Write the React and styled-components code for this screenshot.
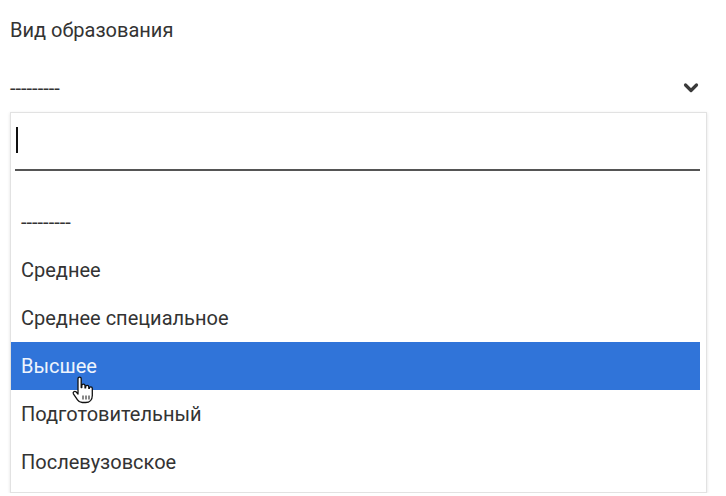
import React from "react";
import styled, { createGlobalStyle } from "styled-components";

const Global = createGlobalStyle`
  html, body { margin: 0; padding: 0; background: #ffffff; }
  body { font-family: Roboto, "Noto Sans", "Liberation Sans", sans-serif; color: #333; }
`;

const Page = styled.div`
  padding: 0 19px 0 10px;
`;

const Label = styled.div`
  margin-top: 18px;
  height: 24px;
  line-height: 24px;
  font-size: 20px;
  color: #333;
`;

const SelectRow = styled.div`
  margin-top: 26px;
  height: 40px;
  display: flex;
  align-items: center;
  justify-content: space-between;
  padding-right: 8px;
  font-size: 20px;
  color: #333;
`;

const Chevron = styled.svg`
  width: 16px;
  height: 16px;
  display: block;
`;

const Panel = styled.div`
  margin-top: 4px;
  border: 1px solid #e2e2e2;
  box-shadow: 0 1px 3px rgba(0, 0, 0, 0.12);
  background: #fff;
  padding-bottom: 6px;
`;

const SearchWrap = styled.div`
  padding: 7px 6px 0 4px;
  margin-bottom: 27px;
`;

const SearchField = styled.div`
  height: 42px;
  padding-top: 7px;
  border-bottom: 2px solid #555;
  display: flex;
  align-items: flex-start;
  padding-left: 1px;
`;

const Caret = styled.span`
  display: block;
  width: 2px;
  height: 26px;
  background: #111;
`;

const List = styled.ul`
  list-style: none;
  margin: 0 6px 0 0;
  padding: 0;
`;

const Item = styled.li`
  position: relative;
  height: 48px;
  display: flex;
  align-items: center;
  padding-left: 10px;
  font-size: 20px;
  color: ${(p) => (p.$active ? "#eef4fd" : "#333")};
  background: ${(p) => (p.$active ? "#3074d9" : "transparent")};
`;

const Hand = styled.svg`
  position: absolute;
  left: 59px;
  top: 34px;
  width: 24px;
  height: 29px;
`;

const options = [
  "---------",
  "Среднее",
  "Среднее специальное",
  "Высшее",
  "Подготовительный",
  "Послевузовское",
];

export default function App() {
  return (
    <>
      <Global />
      <Page>
        <Label>Вид образования</Label>
        <SelectRow>
          <span>---------</span>
          <Chevron viewBox="0 0 16 16">
            <polyline
              points="2.5,5 8,10.5 13.5,5"
              fill="none"
              stroke="#3a3a3a"
              strokeWidth="3.2"
              strokeLinecap="round"
              strokeLinejoin="round"
            />
          </Chevron>
        </SelectRow>
        <Panel>
          <SearchWrap>
            <SearchField>
              <Caret />
            </SearchField>
          </SearchWrap>
          <List>
            {options.map((o) => (
              <Item key={o} $active={o === "Высшее"}>
                {o}
                {o === "Высшее" && (
                  <Hand viewBox="0 0 24 28">
                    <path
                      d="M8 2.2a1.6 1.6 0 0 1 3.2 0V11h.6V9.3a1.6 1.6 0 0 1 3.2 0V11.4h.6v-1a1.6 1.6 0 0 1 3.2 0v1.5h.5a1.5 1.5 0 0 1 3 0V19c0 4-2.6 7-6.6 7h-3.4c-2.1 0-3.7-1-4.8-2.7L3.4 17.4a1.7 1.7 0 0 1 2.6-2.1L8 17.6Z"
                      fill="#fff"
                      stroke="#111"
                      strokeWidth="1.3"
                      strokeLinejoin="round"
                    />
                    <path d="M13 19v4M16 19v4M19 19v4" stroke="#111" strokeWidth="1" />
                  </Hand>
                )}
              </Item>
            ))}
          </List>
        </Panel>
      </Page>
    </>
  );
}
